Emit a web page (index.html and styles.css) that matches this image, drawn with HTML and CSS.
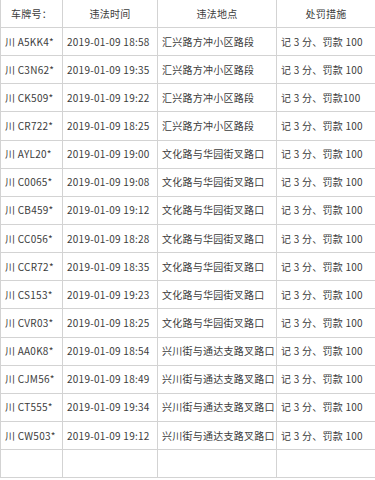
FILE: index.html
```html
<!DOCTYPE html>
<html lang="zh-CN">
<head>
<meta charset="utf-8">
<link rel="stylesheet" href="styles.css">
</head>
<body>
<table class="tbl">
  <colgroup>
    <col class="c1"><col class="c2"><col class="c3"><col class="c4">
  </colgroup>
  <thead>
    <tr class="head"><th class="hc">车牌号：</th><th class="hc">违法时间</th><th class="hc">违法地点</th><th class="hc">处罚措施</th></tr>
  </thead>
  <tbody>
    <tr><td>川 A5KK4*</td><td>2019-01-09 18:58</td><td>汇兴路方冲小区路段</td><td>记 3 分、罚款 100</td></tr>
    <tr><td>川 C3N62*</td><td>2019-01-09 19:35</td><td>汇兴路方冲小区路段</td><td>记 3 分、罚款 100</td></tr>
    <tr><td>川 CK509*</td><td>2019-01-09 19:22</td><td>汇兴路方冲小区路段</td><td>记 3 分、罚款100</td></tr>
    <tr><td>川 CR722*</td><td>2019-01-09 18:25</td><td>汇兴路方冲小区路段</td><td>记 3 分、罚款 100</td></tr>
    <tr><td>川 AYL20*</td><td>2019-01-09 19:00</td><td>文化路与华园街叉路口</td><td>记 3 分、罚款 100</td></tr>
    <tr><td>川 C0065*</td><td>2019-01-09 19:08</td><td>文化路与华园街叉路口</td><td>记 3 分、罚款 100</td></tr>
    <tr><td>川 CB459*</td><td>2019-01-09 19:12</td><td>文化路与华园街叉路口</td><td>记 3 分、罚款 100</td></tr>
    <tr><td>川 CC056*</td><td>2019-01-09 18:28</td><td>文化路与华园街叉路口</td><td>记 3 分、罚款 100</td></tr>
    <tr><td>川 CCR72*</td><td>2019-01-09 18:35</td><td>文化路与华园街叉路口</td><td>记 3 分、罚款 100</td></tr>
    <tr><td>川 CS153*</td><td>2019-01-09 19:23</td><td>文化路与华园街叉路口</td><td>记 3 分、罚款 100</td></tr>
    <tr><td>川 CVR03*</td><td>2019-01-09 18:25</td><td>文化路与华园街叉路口</td><td>记 3 分、罚款 100</td></tr>
    <tr><td>川 AA0K8*</td><td>2019-01-09 18:54</td><td>兴川街与通达支路叉路口</td><td>记 3 分、罚款 100</td></tr>
    <tr><td>川 CJM56*</td><td>2019-01-09 18:49</td><td>兴川街与通达支路叉路口</td><td>记 3 分、罚款 100</td></tr>
    <tr><td>川 CT555*</td><td>2019-01-09 19:34</td><td>兴川街与通达支路叉路口</td><td>记 3 分、罚款 100</td></tr>
    <tr><td>川 CW503*</td><td>2019-01-09 19:12</td><td>兴川街与通达支路叉路口</td><td>记 3 分、罚款 100</td></tr>
    <tr><td></td><td></td><td></td><td></td></tr>
  </tbody>
</table>
</body>
</html>
```

FILE: styles.css
```css
html, body {
  margin: 0;
  padding: 0;
  background: #fff;
}
.tbl {
  width: 375px;
  table-layout: fixed;
  border-collapse: collapse;
  font-family: "Noto Sans CJK SC", sans-serif;
  font-size: 10px;
  letter-spacing: 0.25px;
  color: #3c3c3c;
  text-spacing-trim: space-all;
}
.c1 { width: 62px; }
.c2 { width: 95px; }
.c3 { width: 119px; }
.c4 { width: 99px; }
.tbl th, .tbl td {
  border: 1px solid #d3d3d3;
  padding: 0 4px;
  white-space: nowrap;
  overflow: hidden;
  line-height: 14px;
}
.tbl thead tr { height: 27.5px; }
.tbl .hc {
  border-top: none;
  font-weight: normal;
  text-align: center;
}
.tbl tbody tr { height: 28.15px; }
.tbl td { text-align: left; }
```
